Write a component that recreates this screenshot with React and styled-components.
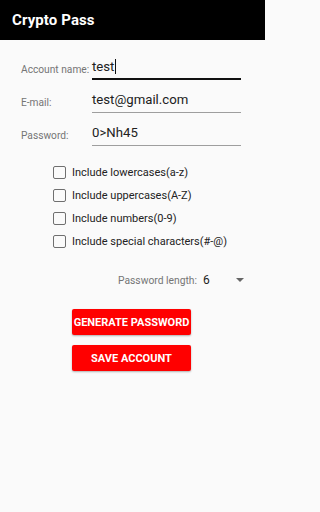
import React from 'react';
import styled, { createGlobalStyle } from 'styled-components';

const GlobalStyle = createGlobalStyle`
  html, body {
    margin: 0;
    padding: 0;
    background: #fafafa;
    font-family: Roboto, "Liberation Sans", sans-serif;
  }
  * {
    box-sizing: border-box;
  }
`;

const Screen = styled.div`
  width: 265px;
  min-height: 512px;
  background: #fafafa;
  display: flex;
  flex-direction: column;
`;

const AppBar = styled.header`
  height: 40px;
  background: #000;
  color: #fff;
  display: flex;
  align-items: center;
  padding: 0 12px;
  font-size: 15px;
  font-weight: 700;
  letter-spacing: 0.1px;
`;

const Form = styled.div`
  display: flex;
  flex-direction: column;
  padding: 7px 24px 0 21px;
`;

const FieldRow = styled.div`
  display: flex;
  align-items: flex-end;
  height: 33px;
`;

const Label = styled.span`
  width: 71px;
  flex-shrink: 0;
  white-space: nowrap;
  font-size: 10.2px;
  color: #757575;
  padding-bottom: 5px;
`;

const Field = styled.div`
  flex: 1;
  height: 24px;
  display: flex;
  align-items: center;
  font-size: 13.2px;
  color: #212121;
  border-bottom: ${(p) => (p.focused ? '2px solid #111' : '1px solid #9e9e9e')};
  padding-bottom: ${(p) => (p.focused ? '1px' : '2px')};
`;

const Caret = styled.span`
  display: inline-block;
  width: 1px;
  height: 15px;
  background: #111;
  margin-left: 1px;
`;

const Options = styled.div`
  display: flex;
  flex-direction: column;
  gap: 10px;
  padding: 20px 0 0 53px;
`;

const Option = styled.label`
  display: flex;
  align-items: center;
  gap: 6px;
  height: 13px;
  font-size: 11px;
  color: #222;
`;

const Box = styled.span`
  width: 13px;
  height: 13px;
  border: 1.5px solid #6f6f6f;
  border-radius: 2px;
  flex-shrink: 0;
`;

const LengthRow = styled.div`
  display: flex;
  align-items: center;
  height: 39px;
  padding: 25px 21px 0 118px;
`;

const LengthLabel = styled.span`
  font-size: 10.3px;
  color: #757575;
  width: 85px;
  white-space: nowrap;
`;

const LengthValue = styled.span`
  font-size: 12px;
  color: #212121;
  flex: 1;
`;

const Arrow = styled.span`
  width: 0;
  height: 0;
  border-left: 4px solid transparent;
  border-right: 4px solid transparent;
  border-top: 4px solid #666;
`;

const Buttons = styled.div`
  display: flex;
  flex-direction: column;
  align-items: center;
  gap: 10px;
  padding-top: 22px;
  padding-right: 2px;
`;

const Button = styled.button`
  width: 119px;
  height: 26px;
  border: none;
  border-radius: 2px;
  background: #ff0000;
  color: #fff;
  font-family: Roboto, "Liberation Sans", sans-serif;
  font-size: 11px;
  font-weight: 700;
  text-transform: uppercase;
  box-shadow: 0 1px 2px rgba(0, 0, 0, 0.3);
  padding: 0;
`;

const options = [
  'Include lowercases(a-z)',
  'Include uppercases(A-Z)',
  'Include numbers(0-9)',
  'Include special characters(#-@)',
];

export default function App() {
  return (
    <>
      <GlobalStyle />
      <Screen>
        <AppBar>Crypto Pass</AppBar>
        <Form>
          <FieldRow>
            <Label>Account name:</Label>
            <Field focused>
              test
              <Caret />
            </Field>
          </FieldRow>
          <FieldRow>
            <Label>E-mail:</Label>
            <Field>test@gmail.com</Field>
          </FieldRow>
          <FieldRow>
            <Label>Password:</Label>
            <Field>0&gt;Nh45</Field>
          </FieldRow>
        </Form>
        <Options>
          {options.map((o) => (
            <Option key={o}>
              <Box />
              {o}
            </Option>
          ))}
        </Options>
        <LengthRow>
          <LengthLabel>Password length:</LengthLabel>
          <LengthValue>6</LengthValue>
          <Arrow />
        </LengthRow>
        <Buttons>
          <Button>Generate password</Button>
          <Button>Save account</Button>
        </Buttons>
      </Screen>
    </>
  );
}
